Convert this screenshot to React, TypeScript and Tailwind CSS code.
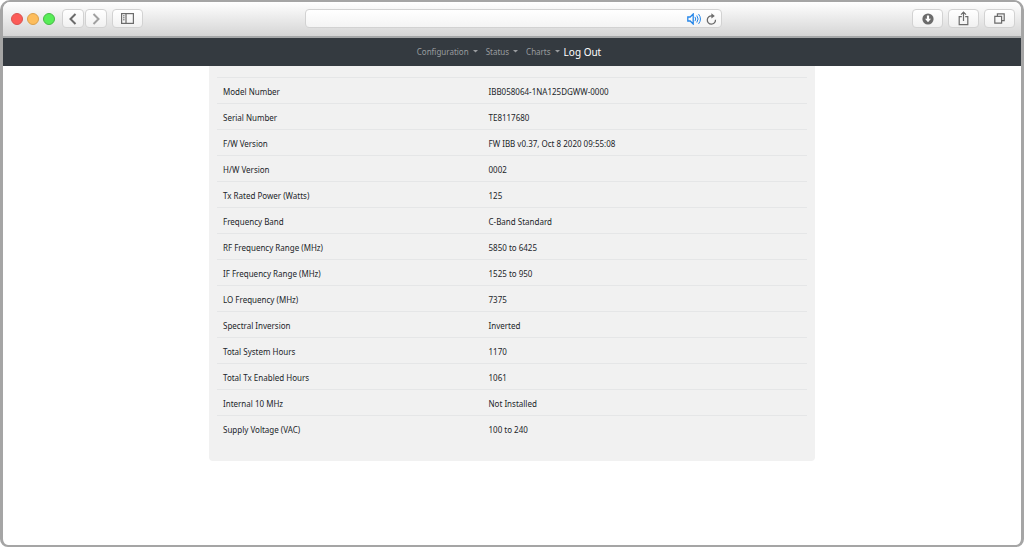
import React from 'react';

const DETAILS = [
    { label: 'Model Number', value: 'IBB058064-1NA125DGWW-0000' },
    { label: 'Serial Number', value: 'TE8117680' },
    { label: 'F/W Version', value: 'FW IBB v0.37, Oct 8 2020 09:55:08' },
    { label: 'H/W Version', value: '0002' },
    { label: 'Tx Rated Power (Watts)', value: '125' },
    { label: 'Frequency Band', value: 'C-Band Standard' },
    { label: 'RF Frequency Range (MHz)', value: '5850 to 6425' },
    { label: 'IF Frequency Range (MHz)', value: '1525 to 950' },
    { label: 'LO Frequency (MHz)', value: '7375' },
    { label: 'Spectral Inversion', value: 'Inverted' },
    { label: 'Total System Hours', value: '1170' },
    { label: 'Total Tx Enabled Hours', value: '1061' },
    { label: 'Internal 10 MHz', value: 'Not Installed' },
    { label: 'Supply Voltage (VAC)', value: '100 to 240' },
];

const MENUS = ['Configuration', 'Status', 'Charts'];

interface ToolButtonProps {
    label: string;
    className: string;
    children: React.ReactNode;
}

const ToolButton: React.FC<ToolButtonProps> = ({ label, className, children }) => (
    <button
        type="button"
        aria-label={label}
        className={`flex h-[19px] items-center justify-center rounded border border-[#d2d2d2] bg-linear-to-b from-white to-[#f1f1f1] text-[#6b6b6b] ${className}`}
    >
        {children}
    </button>
);

const Toolbar = () => (
    <header className="flex h-9 shrink-0 items-center justify-between border-b-2 border-[#a5a7a8] bg-linear-to-b from-white to-[#d5d5d5] pr-1.5 pb-px pl-2">
        <div className="flex flex-1 items-center">
            <div className="flex gap-1">
                <span className="size-3 rounded-full border border-[#d9534f] bg-[#fc5b57]" />
                <span className="size-3 rounded-full border border-[#d9a04c] bg-[#fdbd5c]" />
                <span className="size-3 rounded-full border border-[#47b946] bg-[#57ed57]" />
            </div>
            <div className="ml-[7px] flex gap-px">
                <ToolButton label="Back" className="w-[22px]">
                    <svg width="12" height="14" viewBox="0 0 12 14" fill="none" stroke="currentColor" strokeWidth="2">
                        <path d="M8.5 2 3.5 7l5 5" />
                    </svg>
                </ToolButton>
                <ToolButton label="Forward" className="w-[22px]">
                    <svg width="12" height="14" viewBox="0 0 12 14" fill="none" stroke="#a0a0a0" strokeWidth="2">
                        <path d="m3.5 2 5 5-5 5" />
                    </svg>
                </ToolButton>
            </div>
            <ToolButton label="Show sidebar" className="ml-[5px] w-[31px]">
                <svg width="13" height="11" viewBox="0 0 13 11" fill="none" stroke="currentColor">
                    <rect x="0.6" y="0.6" width="11.8" height="9.8" strokeWidth="1.2" />
                    <path d="M5 0.5v10" strokeWidth="1.2" />
                    <path d="M2 2.8h1.6M2 4.8h1.6M2 6.8h1.6" />
                </svg>
            </ToolButton>
        </div>

        {/* Address bar */}
        <div className="flex h-[19px] w-[417px] items-center rounded border border-[#d2d2d2] bg-linear-to-b from-white to-[#f4f4f4] pr-1">
            <input type="text" aria-label="Address" className="h-full min-w-0 flex-1 bg-transparent px-2 text-xs outline-none" />
            <button type="button" aria-label="Mute tab">
                <svg width="15" height="12" viewBox="0 0 15 12" fill="none" stroke="#2687e9" strokeLinecap="round">
                    <path d="M0.8 4h2.4L6.2 1v10L3.2 8H0.8z" strokeWidth="1.3" />
                    <path d="M8.2 4.2q1.3 1.8 0 3.6M10 2.8q2.4 3.2 0 6.4M11.8 1.4q3.6 4.6 0 9.2" />
                </svg>
            </button>
            <button type="button" aria-label="Reload" className="ml-1">
                <svg width="11" height="12" viewBox="0 0 11 12" fill="none">
                    <path d="M9.5 6.8A4.1 4.1 0 1 1 6 3" stroke="#6b6b6b" strokeWidth="1.3" />
                    <path d="M5.4 0.3 8.8 3 5.4 5.6z" fill="#6b6b6b" />
                </svg>
            </button>
        </div>

        <div className="flex flex-1 justify-end gap-[5px]">
            <ToolButton label="Downloads" className="w-[31px]">
                <svg width="12" height="12" viewBox="0 0 12 12">
                    <circle cx="6" cy="6" r="5.6" fill="currentColor" />
                    <path d="M4.9 2.6h2.2v3.2H9L6 9.2 3 5.8h1.9z" fill="#fff" />
                </svg>
            </ToolButton>
            <ToolButton label="Share" className="w-[31px]">
                <svg width="11" height="15" viewBox="0 0 11 15" fill="none" stroke="currentColor" strokeWidth="1.2">
                    <path d="M3.8 5.6H1.2v8h8.6v-8H7.2M5.5 10V1.2M3 3.6l2.5-2.5L8 3.6" />
                </svg>
            </ToolButton>
            <ToolButton label="Show tabs" className="w-[31px]">
                <svg width="11" height="11" viewBox="0 0 11 11" fill="none" stroke="currentColor" strokeWidth="1.2">
                    <path d="M0.8 3.4h6.8v6.8H0.8zM3.4 3.4V0.8h6.8v6.8H7.6" />
                </svg>
            </ToolButton>
        </div>
    </header>
);

const NavBar = () => (
    <nav className="flex h-7 shrink-0 items-center justify-center bg-[#343a40] pr-1.5">
        <div className="flex gap-2">
            {MENUS.map((menu) => (
                <button key={menu} type="button" className="flex items-center gap-1 text-[8px] leading-3 text-[#999c9f]">
                    {menu}
                    <svg width="5" height="6" viewBox="0 0 5 6" fill="currentColor">
                        <path d="M0 1h5L2.5 3.5z" />
                    </svg>
                </button>
            ))}
        </div>
        <a href="#logout" className="ml-1 text-[10px] leading-4 text-white">
            Log Out
        </a>
    </nav>
);

export default function App() {
    return (
        <div className="flex min-h-screen bg-white font-['Noto_Sans','Open_Sans',sans-serif]">
            <div className="flex flex-1 flex-col overflow-hidden rounded-t-[10px] rounded-b-lg border-x-3 border-y-2 border-[#a5a5a5] bg-white">
                <Toolbar />
                <NavBar />
                <main className="mx-auto w-full max-w-[606px] rounded-b-sm bg-[#f1f1f1] px-2 pt-[11px] pb-[19px]">
                    <table className="w-full table-fixed text-left text-[8px] leading-3 text-[#212529]">
                        <tbody>
                            {DETAILS.map((row) => (
                                <tr key={row.label} className="h-[26px] border-t border-[#e5e6e7]">
                                    <th scope="row" className="w-[45%] px-1.5 pt-0.5 font-normal">{row.label}</th>
                                    <td className="px-1.5 pt-0.5">{row.value}</td>
                                </tr>
                            ))}
                        </tbody>
                    </table>
                </main>
            </div>
        </div>
    );
}
